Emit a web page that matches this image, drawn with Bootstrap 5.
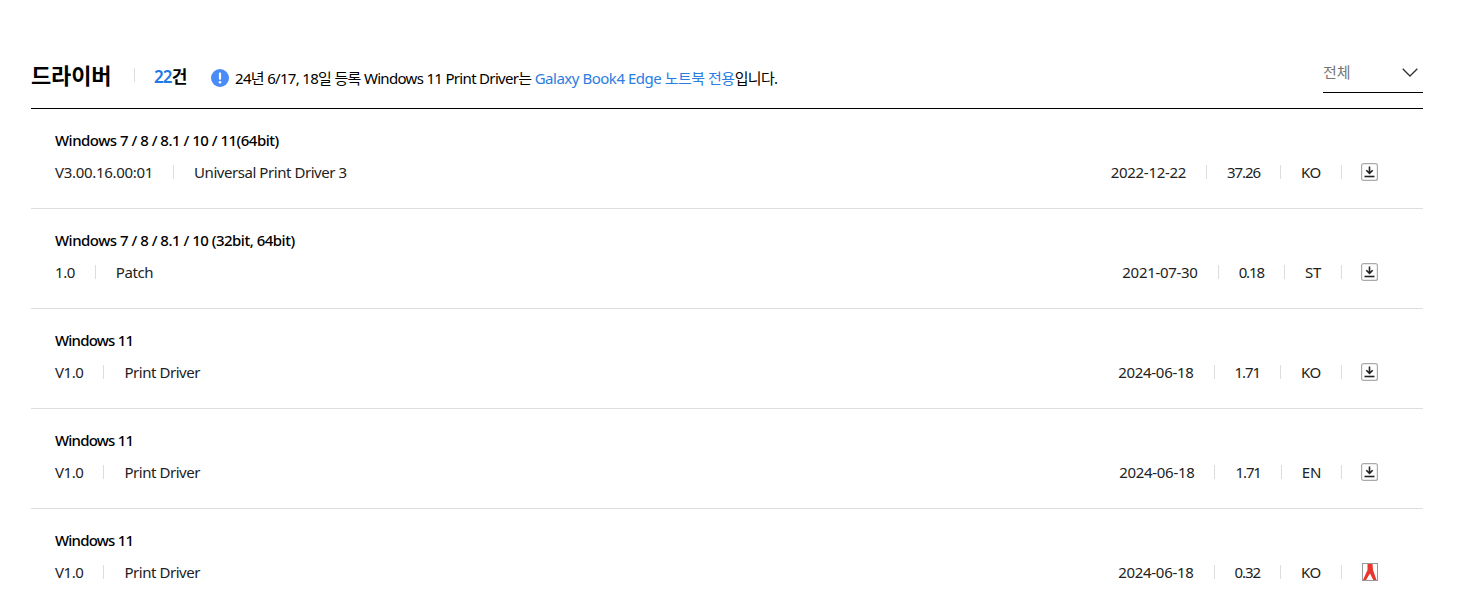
<!DOCTYPE html>
<html lang="ko">
<head>
<meta charset="utf-8">
<title>드라이버</title>
<link href="https://cdn.jsdelivr.net/npm/bootstrap@5.3.0/dist/css/bootstrap.min.css" rel="stylesheet">
<style>
body{background:#fff;color:#000;font-family:"Noto Sans","Noto Sans CJK KR",sans-serif;font-size:15px;overflow:hidden;height:607px}
.drv-wrap{margin:0 36px 0 31px;padding-top:60px}
.drv-head{height:49px;border-bottom:1px solid #000}
.drv-title{font-size:22px;font-weight:700;line-height:30px;letter-spacing:-.15px;width:103px}
.drv-sep{width:1px;height:14px;background:#ddd;flex:none}
.drv-count{font-size:17px;font-weight:600;letter-spacing:-.9px;margin:6px 0 0 19px;width:57px;line-height:22px}
.drv-count b{color:#1f7ae8;font-weight:600}
.drv-notice{letter-spacing:-.68px;line-height:20px}
.drv-notice a{color:#2a7de1;text-decoration:none;letter-spacing:-.48px}
.drv-info{width:18px;height:18px;flex:none;margin-right:6px}
.drv-select{width:100px;height:33px;border-bottom:1px solid #000;color:#767676;font-size:15px;line-height:20px;padding:2px 5px 0 0}
.drv-chev{margin-top:6px}
.drv-row{height:100px;border-bottom:1px solid #ddd;padding:20px 45px 0 24px}
.drv-name{font-weight:500;line-height:22px;letter-spacing:-.5px;margin-bottom:11px}
.drv-name-short{letter-spacing:-.8px}
.drv-meta{height:20px;line-height:20px;letter-spacing:-.3px;color:#222}
.drv-meta .drv-sep{margin:0 20px}
.drv-meta .drv-sep:nth-last-child(2){margin-right:19px}
.drv-left{letter-spacing:-.45px}
.drv-size{letter-spacing:-1.1px}
.drv-ico{width:17px;height:18px;display:block;flex:none}
</style>
</head>
<body>
<main class="drv-wrap">
  <header class="drv-head d-flex align-items-start">
    <h2 class="drv-title m-0">드라이버</h2>
    <span class="drv-sep mt-2"></span>
    <span class="drv-count"><b>22</b>건</span>
    <p class="drv-notice d-flex align-items-center m-0 mt-2">
      <svg class="drv-info" viewBox="0 0 18 18"><circle cx="9" cy="9" r="9" fill="#4a8cf7"/><rect x="7.9" y="3.6" width="2.2" height="7.2" rx="1" fill="#fff"/><circle cx="9" cy="13.2" r="1.3" fill="#fff"/></svg>
      <span>24년 6/17, 18일 등록 Windows 11 Print Driver는 <a href="#">Galaxy Book4 Edge 노트북 전용</a>입니다.</span>
    </p>
    <div class="drv-select ms-auto d-flex justify-content-between align-items-start">
      <span>전체</span>
      <svg class="drv-chev" width="16" height="9" viewBox="0 0 16 9"><path d="M.7.7 8 8l7.3-7.3" fill="none" stroke="#333" stroke-width="1.3"/></svg>
    </div>
  </header>

  <section class="drv-row">
    <div class="drv-name">Windows 7 / 8 / 8.1 / 10 / 11(64bit)</div>
    <div class="drv-meta d-flex align-items-center">
      <span>V3.00.16.00:01</span><span class="drv-sep"></span><span class="drv-left">Universal Print Driver 3</span>
      <span class="ms-auto">2022-12-22</span><span class="drv-sep"></span><span class="drv-size">37.26</span><span class="drv-sep"></span><span>KO</span><span class="drv-sep"></span>
      <svg class="drv-ico" viewBox="1 0 17 18"><rect x="1.6" y=".6" width="15.8" height="16.8" rx="2" fill="#fff" stroke="#aaa" stroke-width="1.2"/><path d="M9.5 3.5v6.5M6.3 7.2l3.2 3.2 3.2-3.2" fill="none" stroke="#222" stroke-width="1.6"/><path d="M4.5 13.5h10" stroke="#222" stroke-width="1.6"/></svg>
    </div>
  </section>
  <section class="drv-row">
    <div class="drv-name">Windows 7 / 8 / 8.1 / 10 (32bit, 64bit)</div>
    <div class="drv-meta d-flex align-items-center">
      <span class="drv-left">1.0</span><span class="drv-sep"></span><span class="drv-left">Patch</span>
      <span class="ms-auto">2021-07-30</span><span class="drv-sep"></span><span class="drv-size">0.18</span><span class="drv-sep"></span><span>ST</span><span class="drv-sep"></span>
      <svg class="drv-ico" viewBox="1 0 17 18"><rect x="1.6" y=".6" width="15.8" height="16.8" rx="2" fill="#fff" stroke="#aaa" stroke-width="1.2"/><path d="M9.5 3.5v6.5M6.3 7.2l3.2 3.2 3.2-3.2" fill="none" stroke="#222" stroke-width="1.6"/><path d="M4.5 13.5h10" stroke="#222" stroke-width="1.6"/></svg>
    </div>
  </section>
  <section class="drv-row">
    <div class="drv-name drv-name-short">Windows 11</div>
    <div class="drv-meta d-flex align-items-center">
      <span class="drv-left">V1.0</span><span class="drv-sep"></span><span class="drv-left">Print Driver</span>
      <span class="ms-auto">2024-06-18</span><span class="drv-sep"></span><span class="drv-size">1.71</span><span class="drv-sep"></span><span>KO</span><span class="drv-sep"></span>
      <svg class="drv-ico" viewBox="1 0 17 18"><rect x="1.6" y=".6" width="15.8" height="16.8" rx="2" fill="#fff" stroke="#aaa" stroke-width="1.2"/><path d="M9.5 3.5v6.5M6.3 7.2l3.2 3.2 3.2-3.2" fill="none" stroke="#222" stroke-width="1.6"/><path d="M4.5 13.5h10" stroke="#222" stroke-width="1.6"/></svg>
    </div>
  </section>
  <section class="drv-row">
    <div class="drv-name drv-name-short">Windows 11</div>
    <div class="drv-meta d-flex align-items-center">
      <span class="drv-left">V1.0</span><span class="drv-sep"></span><span class="drv-left">Print Driver</span>
      <span class="ms-auto">2024-06-18</span><span class="drv-sep"></span><span class="drv-size">1.71</span><span class="drv-sep"></span><span>EN</span><span class="drv-sep"></span>
      <svg class="drv-ico" viewBox="1 0 17 18"><rect x="1.6" y=".6" width="15.8" height="16.8" rx="2" fill="#fff" stroke="#aaa" stroke-width="1.2"/><path d="M9.5 3.5v6.5M6.3 7.2l3.2 3.2 3.2-3.2" fill="none" stroke="#222" stroke-width="1.6"/><path d="M4.5 13.5h10" stroke="#222" stroke-width="1.6"/></svg>
    </div>
  </section>
  <section class="drv-row">
    <div class="drv-name drv-name-short">Windows 11</div>
    <div class="drv-meta d-flex align-items-center">
      <span class="drv-left">V1.0</span><span class="drv-sep"></span><span class="drv-left">Print Driver</span>
      <span class="ms-auto">2024-06-18</span><span class="drv-sep"></span><span class="drv-size">0.32</span><span class="drv-sep"></span><span>KO</span><span class="drv-sep"></span>
      <svg class="drv-ico" viewBox="1 0 17 18"><rect x="2.5" y=".5" width="15" height="17" fill="#fff" stroke="#999"/><path d="M7.5 1h5l.5 6 3.5 10h-3.2L10 10.5 6 17H3l4.5-10z" fill="#e8362c"/></svg>
    </div>
  </section>
</main>
<script src="https://cdn.jsdelivr.net/npm/bootstrap@5.3.0/dist/js/bootstrap.bundle.min.js"></script>
</body>
</html>
